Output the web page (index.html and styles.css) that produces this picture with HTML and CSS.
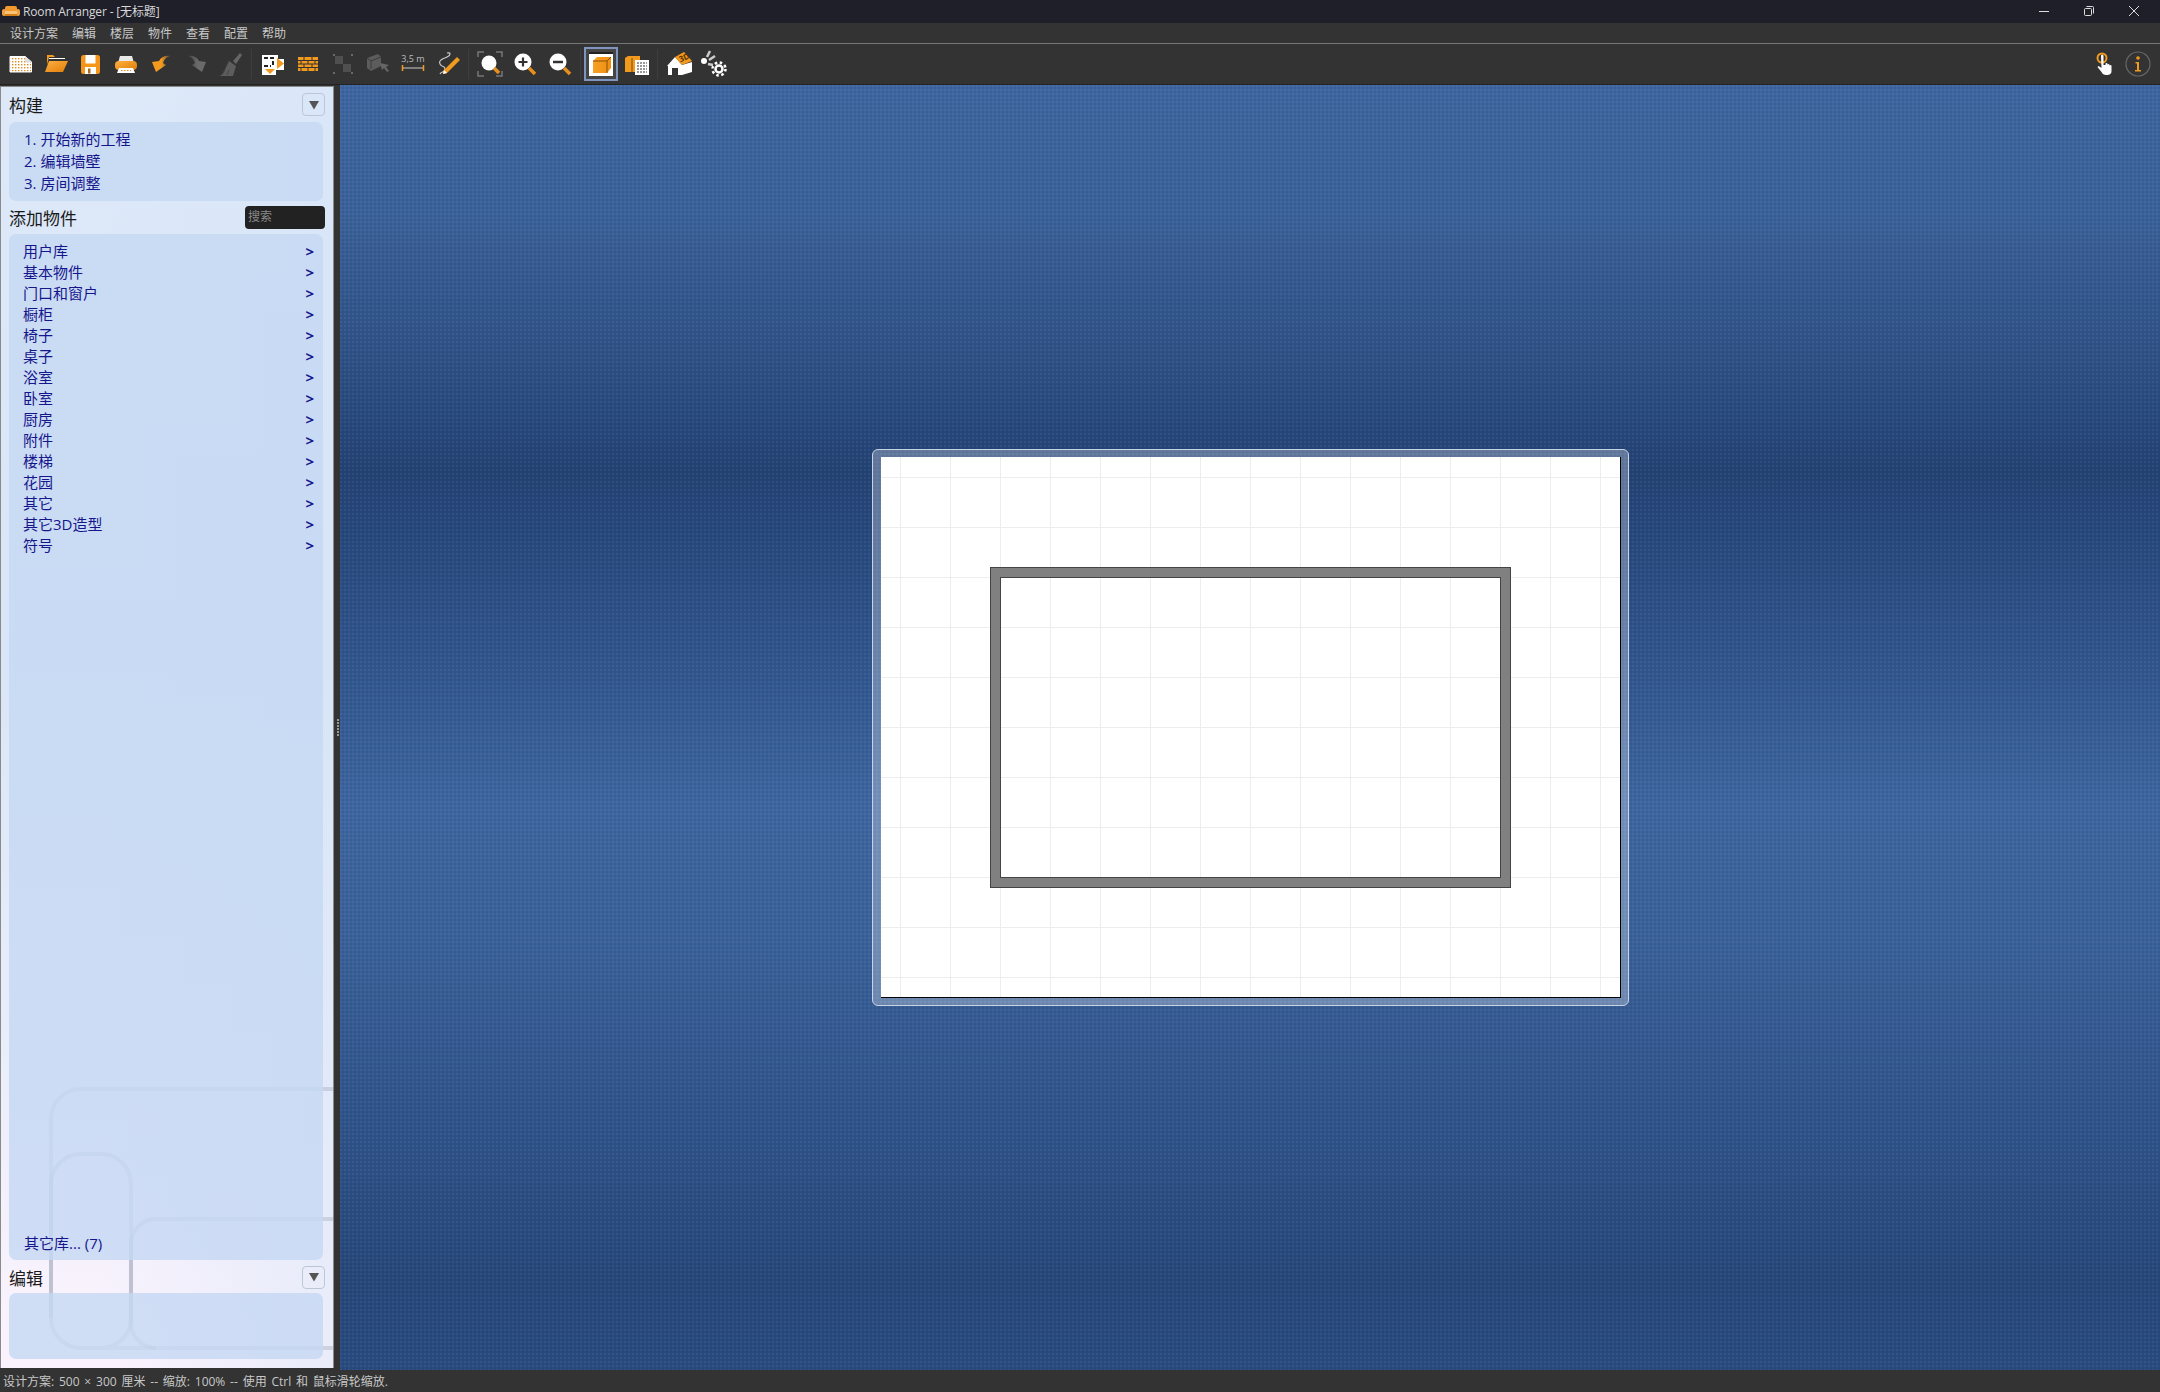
FILE: index.html
```html
<!DOCTYPE html>
<html lang="zh">
<head>
<meta charset="utf-8">
<title>Room Arranger</title>
<link rel="stylesheet" href="styles.css">
</head>
<body>
<svg class="defs" width="0" height="0">
  <defs>
    <pattern id="dots" width="3" height="3" patternUnits="userSpaceOnUse"><rect width="3" height="3" fill="#fff"/><rect x="1" y="1" width="1.4" height="1.4" fill="#e08a20"/></pattern>
    <linearGradient id="org" x1="0" y1="0" x2="1" y2="1"><stop offset="0" stop-color="#ffb040"/><stop offset="1" stop-color="#e07d0a"/></linearGradient>
    <linearGradient id="swoosh" x1="0" y1="0" x2="1" y2="0"><stop offset=".5" stop-color="#f29a1e"/><stop offset="1" stop-color="#3a3a3a"/></linearGradient>
    <linearGradient id="swooshd" x1="0" y1="0" x2="1" y2="0"><stop offset="0" stop-color="#3a3a3a"/><stop offset=".55" stop-color="#6a6a6a"/></linearGradient>
    <linearGradient id="cube" x1="0" y1="0" x2="1" y2="0"><stop offset="0" stop-color="#f7a126"/><stop offset="1" stop-color="#ee8e10"/></linearGradient>
  </defs>
</svg>

<header class="titlebar">
  <svg class="appicon" width="18" height="12" viewBox="0 0 18 12"><rect x="3" y="1" width="12" height="6" rx="2" fill="#f29a2e"/><rect x="0" y="4" width="4" height="7" rx="2" fill="#f2a040"/><rect x="14" y="4" width="4" height="7" rx="2" fill="#f2a040"/><rect x="3" y="6" width="12" height="4" fill="#fbc27a"/><rect x="3" y="9" width="12" height="2" fill="#d57d15"/></svg>
  <span class="apptitle">Room Arranger - [无标题]</span>
  <div class="winctl">
    <svg width="12" height="12" viewBox="0 0 12 12"><path d="M1 6.500h10" stroke="#ddd"/></svg>
    <svg width="12" height="12" viewBox="0 0 12 12"><rect x="1.500" y="3.500" width="7" height="7" rx="1" fill="none" stroke="#ddd"/><path d="M3.500 1.500h6a1 1 0 0 1 1 1v6" fill="none" stroke="#ddd"/></svg>
    <svg width="12" height="12" viewBox="0 0 12 12"><path d="M1 1l10 10M11 1L1 11" stroke="#ddd"/></svg>
  </div>
</header>

<nav class="menubar">
  <span>设计方案</span><span>编辑</span><span>楼层</span><span>物件</span><span>查看</span><span>配置</span><span>帮助</span>
</nav>

<div class="toolbar">
  <div class="tool"><svg viewBox="0 0 32 32"><path d="M5 8.500h15l6.500 5.500v10H5z" fill="url(#dots)" stroke="#fff"/><path d="M20 8v6h7z" fill="#ddd"/></svg></div>
  <div class="tool"><svg viewBox="0 0 32 32"><path d="M7 7h6l2 2H9l-2 8z" fill="#f29a1e"/><path d="M9 10h16v1H9z" fill="#fff"/><path d="M9 13h19l-5 11H5z" fill="url(#org)"/></svg></div>
  <div class="tool"><svg viewBox="0 0 32 32"><rect x="6" y="7" width="19" height="19" rx="2.500" fill="#f5951a"/><rect x="10.500" y="7" width="10" height="8.500" fill="#fff"/><rect x="10" y="19" width="11" height="7" fill="#fff"/><rect x="13" y="20.500" width="2.500" height="5" fill="#a86b20"/></svg></div>
  <div class="tool"><svg viewBox="0 0 32 32"><path d="M10 8h12l2 7H8z" fill="#e8e8e8"/><rect x="5" y="13" width="22" height="9" rx="4" fill="url(#org)"/><path d="M9 20h14l2 5H7z" fill="#fff"/><path d="M11 22.500h10" stroke="#e08a20" stroke-dasharray="1.500 1.500"/></svg></div>
  <div class="tool"><svg viewBox="0 0 32 32"><path d="M7 14l7-1c2-4 6-6 12-5-5 1-7 4-8 7l3 2-10 7z" fill="url(#swoosh)"/></svg></div>
  <div class="tool"><svg viewBox="0 0 32 32"><path d="M26 14l-7-1c-2-4-6-6-12-5 5 1 7 4 8 7l-3 2 10 7z" fill="url(#swooshd)"/></svg></div>
  <div class="tool"><svg viewBox="0 0 32 32"><path d="M25 5l2 2-6 9-3-3z" fill="#666"/><path d="M14 13l7 5-3 10H5c4-3 6-9 9-15z" fill="#5d5d5d"/><path d="M10 22l-3 5M14 22l-2 5" stroke="#444"/></svg></div>
  <i class="sep"></i>
  <div class="tool"><svg viewBox="0 0 32 32"><path d="M5 7h16v4h6v11h-8v5H5z" fill="#fff"/><path d="M7 10h12M7 18h7M16 13v5" stroke="#222" stroke-width="2" stroke-dasharray="4 2"/><path d="M20 10l7 5.500-7 5.500z" fill="#f29a1e"/><path d="M8 21h10l-5 5z" fill="#f29a1e"/></svg></div>
  <div class="tool"><svg viewBox="0 0 32 32"><path d="M6 9h20v14H6z" fill="#f29a1e"/><path d="M6 12.500h20M6 16h20M6 19.500h20M12 9v3.500M20 9v3.500M9 12.500V16M16 12.500V16M23 12.500V16M12 16v3.500M20 16v3.500M9 19.500V23M16 19.500V23M23 19.500V23" stroke="#333" stroke-width="1"/></svg></div>
  <div class="tool"><svg viewBox="0 0 32 32"><path d="M8 8h8v8H8zM16 16h8v8h-8z" fill="#4f4f4f"/><path d="M6 6h2v2H6zM24 6h2v2h-2zM6 24h2v2H6zM24 24h2v2h-2z" fill="#6a6a6a"/></svg></div>
  <div class="tool"><svg viewBox="0 0 32 32"><path d="M5 10l11-4 3 3v9l-10 5-4-3z" fill="#5c5c5c"/><path d="M5 10l4 3 10-4M9 13v8" stroke="#3c3c3c" fill="none"/><path d="M18 15l9 2-3 2 3 4-2 1-3-4-2 2z" fill="#666"/></svg></div>
  <div class="tool"><svg viewBox="0 0 32 32"><text class="measure" x="16" y="14" text-anchor="middle">3,5 m</text><path d="M6 20h20" stroke="#ccc"/><path d="M5.500 17v6M26.500 17v6" stroke="#f29a1e" stroke-width="1.500"/></svg></div>
  <div class="tool"><svg viewBox="0 0 32 32"><path d="M15 5c4-1 4 2 0 4s-9 3-7 7 5 1 5 5-4 2-5 5" fill="none" stroke="#ccc" stroke-width="1.200"/><path d="M25 9l3 3-13 13-4 1 1-4z" fill="#f29a1e"/><path d="M11 26l1-4 3 3z" fill="#fff"/></svg></div>
  <i class="sep"></i>
  <div class="tool"><svg viewBox="0 0 32 32"><path d="M4 9V4h6M22 4h6v5M28 23v5h-6M10 28H4v-5" fill="none" stroke="#777" stroke-width="1.500"/><circle cx="15" cy="15" r="7.500" fill="#fff"/><path d="M20 20l5 5" stroke="#e58f1f" stroke-width="3.500"/></svg></div>
  <div class="tool"><svg viewBox="0 0 32 32"><circle cx="14" cy="14" r="8.500" fill="#fff"/><path d="M9.500 14h9M14 9.500v9" stroke="#333" stroke-width="2.200"/><path d="M20 20l6 6" stroke="#e58f1f" stroke-width="3.500"/></svg></div>
  <div class="tool"><svg viewBox="0 0 32 32"><circle cx="14" cy="14" r="8.500" fill="#fff"/><path d="M9 14h10" stroke="#333" stroke-width="2.500"/><path d="M20 20l6 6" stroke="#e58f1f" stroke-width="3.500"/></svg></div>
  <i class="sep"></i>
  <div class="tool is-active"><svg viewBox="0 0 30 30"><rect x="3" y="3" width="24" height="24" fill="#fff"/><rect x="3" y="3" width="24" height="2" fill="#222"/><path d="M7 12l4-4h14v11l-4 5H7z" fill="url(#cube)"/><path d="M7 12h14v12M21 12l4-4" fill="none" stroke="#8a5208"/></svg></div>
  <div class="tool"><svg viewBox="0 0 32 32"><path d="M4 10l3-2h12v16H4z" fill="#f29a1e"/><path d="M11 10v14" stroke="#7a4a08"/><rect x="14" y="12" width="14" height="15" fill="#fff"/><path d="M16 15h10M16 18h10M16 21h10M16 24h10" stroke="#333" stroke-dasharray="2 1"/></svg></div>
  <i class="sep"></i>
  <div class="tool"><svg viewBox="0 0 32 32"><path d="M4 18l8-9 7 8v10H5V18zM19 17l10-3v10l-10 3z" fill="#fff"/><path d="M9 20h6v7H9z" fill="#333"/><path d="M12 9l9-5 8 9-10 4z" fill="#f29a1e"/><text class="roof" x="16" y="13" transform="rotate(-24 20 10)">3D</text></svg></div>
  <div class="tool"><svg viewBox="0 0 32 32"><circle cx="6" cy="13" r="3" fill="#fff"/><path d="M9 9l3-6M11 12l6-4M10 16l5 1" stroke="#ccc" stroke-width="2.500"/><circle cx="21" cy="21" r="3.500" fill="none" stroke="#fff" stroke-width="2.500"/><circle cx="21" cy="21" r="6.500" fill="none" stroke="#fff" stroke-width="2.500" stroke-dasharray="2.500 2.600"/></svg></div>
  <div class="tool-spacer"></div>
  <div class="tool tool-hand"><svg viewBox="0 0 32 32"><circle cx="14" cy="10" r="4.500" fill="none" stroke="#f29a1e" stroke-width="2"/><path d="M13 8a1.200 1.200 0 0 1 2.500 0v9l2 0 0-1a1 1 0 0 1 2 0v1a1 1 0 0 1 2 0v1a1 1 0 0 1 2 0v5c0 3-2 4-5 4s-4-1-5-3l-4-5 1-1 3 2z" fill="#fff"/></svg></div>
  <div class="tool tool-info"><svg viewBox="0 0 32 32"><circle cx="16" cy="16" r="12" fill="none" stroke="#666" stroke-width="1.200"/><circle cx="16" cy="10" r="1.800" fill="#f29a1e"/><path d="M13.500 14h3.500v8h2v1.500h-6V22h2v-6.500h-1.500z" fill="#f29a1e"/></svg></div>
</div>

<main class="workspace">
  <aside class="sidebar">
    <svg class="decor" width="332" height="300" viewBox="0 0 332 300"><g fill="none" stroke="#8c95a8" stroke-opacity=".3" stroke-width="4"><path d="M332 21H80a30 30 0 0 0-30 30v199"/><path d="M332 280H80a30 30 0 0 1-30-30V116a30 30 0 0 1 30-30h20a30 30 0 0 1 30 30v134a30 30 0 0 1-30 30"/><path d="M332 151H155a25 25 0 0 0-25 25v79a25 25 0 0 0 25 25"/></g></svg>
    <div class="panel-head panel-head-first"><h2>构建</h2><button class="collapse" type="button"><svg width="12" height="10" viewBox="0 0 12 10"><path d="M1 1h10L6 9.500z" fill="#555"/></svg></button></div>
    <section class="box steps">
      <a>1. 开始新的工程</a>
      <a>2. 编辑墙壁</a>
      <a>3. 房间调整</a>
    </section>
    <div class="panel-head"><h2>添加物件</h2><div class="search">搜索</div></div>
    <section class="box catalog">
      <a>用户库<b>&gt;</b></a>
      <a>基本物件<b>&gt;</b></a>
      <a>门口和窗户<b>&gt;</b></a>
      <a>橱柜<b>&gt;</b></a>
      <a>椅子<b>&gt;</b></a>
      <a>桌子<b>&gt;</b></a>
      <a>浴室<b>&gt;</b></a>
      <a>卧室<b>&gt;</b></a>
      <a>厨房<b>&gt;</b></a>
      <a>附件<b>&gt;</b></a>
      <a>楼梯<b>&gt;</b></a>
      <a>花园<b>&gt;</b></a>
      <a>其它<b>&gt;</b></a>
      <a>其它3D造型<b>&gt;</b></a>
      <a>符号<b>&gt;</b></a>
      <a class="more">其它库... (7)</a>
    </section>
    <div class="panel-head panel-head-last"><h2>编辑</h2><button class="collapse" type="button"><svg width="12" height="10" viewBox="0 0 12 10"><path d="M1 1h10L6 9.500z" fill="#555"/></svg></button></div>
    <section class="box editor"></section>
  </aside>
  <div class="gutter"><i></i><i></i><i></i><i></i><i></i><i></i></div>
  <div class="canvas">
    <div class="paper">
      <div class="sheet">
        <div class="room"></div>
      </div>
    </div>
  </div>
</main>

<footer class="statusbar">设计方案: 500 × 300 厘米 -- 缩放: 100% -- 使用 Ctrl 和 鼠标滑轮缩放.</footer>
</body>
</html>
```

FILE: styles.css
```css
* { box-sizing: border-box; }
html, body { height: 100%; }
body {
  margin: 0;
  display: flex;
  flex-direction: column;
  height: 1392px;
  overflow: hidden;
  background: #333;
  font-family: "Open Sans", "Noto Sans CJK SC", sans-serif;
}
.defs { position: absolute; }

.titlebar {
  flex: 0 0 23px;
  display: flex;
  align-items: center;
  padding: 0 0 1px 2px;
  background: #1e1f29;
  color: #d8d8d8;
  font-size: 12px;
}
.appicon { margin-right: 3px; }
.apptitle { letter-spacing: -.15px; }
.winctl { margin-left: auto; display: flex; gap: 33px; padding-right: 20px; }
.winctl svg { display: block; }

.menubar {
  flex: 0 0 21px;
  display: flex;
  align-items: center;
  padding: 0 0 1px 10px;
  gap: 14px;
  background: #333;
  border-bottom: 1px solid #777;
  color: #c8c8c8;
  font-size: 12px;
}

.toolbar {
  flex: 0 0 41px;
  display: flex;
  align-items: center;
  padding: 0 4px 1px 3px;
  background: #333;
  border-bottom: 1px solid #222;
}
.tool {
  flex: 0 0 35px;
  height: 32px;
  display: flex;
  justify-content: center;
}
.tool svg { width: 32px; height: 32px; display: block; }
.tool.is-active {
  height: 34px;
  flex-basis: 34px;
  margin-right: 1px;
  align-items: center;
  background: #444;
  border: 2px solid #7f95bd;
}
.tool.is-active svg { width: 30px; height: 30px; }
.sep {
  flex: 0 0 1px;
  height: 30px;
  margin: 0 3px;
  background: #3e3e3e;
}
.tool-spacer { flex: 1; }
.tool-info { flex-basis: 33px; margin-right: 2px; }
.measure { font: 9px "Open Sans", sans-serif; fill: #bbb; }
.roof { font: bold 8px "Open Sans", sans-serif; fill: #553000; }

.workspace {
  flex: 1;
  display: flex;
  min-height: 0;
}

.sidebar {
  position: relative;
  flex: 0 0 334px;
  display: flex;
  flex-direction: column;
  margin-top: 1px;
  margin-bottom: 2px;
  padding: 0 10px 9px 8px;
  border-left: 1px solid #8a8a8a;
  border-right: 1px solid #8a8a8a;
  border-top: 1px solid #888;
  background:
    linear-gradient(to right, rgba(214, 228, 246, 0) 30%, rgba(214, 228, 246, .45)),
    linear-gradient(#dde9f9, #d9e6f7 45%, #eaeefb 75%, #faf3fd 97%);
}
.decor {
  position: absolute;
  left: 0;
  bottom: 0;
}
.panel-head {
  position: relative;
  flex: 0 0 33px;
  display: flex;
  align-items: center;
  justify-content: space-between;
  margin-right: -2px;
}
.panel-head-first { flex-basis: 35px; }
.panel-head-last { padding-top: 1px; }
.panel-head h2 {
  margin: 0;
  font-size: 17px;
  font-weight: 400;
  color: #1a1a1a;
}
.collapse {
  width: 23px;
  height: 23px;
  padding: 0;
  display: flex;
  align-items: center;
  justify-content: center;
  border: 1px solid #bcc7d6;
  border-radius: 4px;
  background: transparent;
}
.search {
  width: 80px;
  height: 23px;
  padding-left: 3px;
  line-height: 22px;
  border-radius: 4px;
  background: #222;
  color: #888;
  font-size: 12px;
}
.box {
  position: relative;
  display: flex;
  flex-direction: column;
  border-radius: 7px;
  background: rgba(198, 216, 243, .82);
  color: #16168c;
  font-size: 15px;
}
.steps {
  flex: 0 0 79px;
  padding: 6px 0 0 15px;
}
.steps a { height: 22px; line-height: 22px; }
.catalog {
  flex: 1;
  padding: 7px 0 6px 14px;
}
.catalog a {
  display: flex;
  justify-content: space-between;
  height: 21px;
  line-height: 21px;
  padding-right: 9px;
}
.catalog b {
  font-size: 15px;
  font-weight: 700;
  line-height: 20px;
  font-family: "Open Sans", sans-serif;
}
.catalog .more {
  margin-top: auto;
  margin-left: 1px;
  display: block;
}
.editor { flex: 0 0 66px; }

.gutter {
  flex: 0 0 6px;
  display: flex;
  flex-direction: column;
  justify-content: center;
  align-items: center;
  gap: 1px;
  padding-left: 1px;
  background: #333;
}
.gutter i { width: 2px; height: 2px; background: #999; }

.canvas {
  flex: 1;
  display: flex;
  align-items: center;
  justify-content: center;
  padding-left: 1px;
  background:
    radial-gradient(circle at 1px 1px, rgba(255, 255, 255, .05) 1px, transparent 1.3px) 0 0 / 4px 4px,
    radial-gradient(circle at 3px 3px, rgba(0, 0, 0, .05) 1px, transparent 1.3px) 0 0 / 4px 4px,
    linear-gradient(#3d659f 0%, #3a6199 10%, #2a4c80 24%, #234274 30%, #2d5188 42%, #3d659f 56%, #3a6199 66%, #2f548b 80%, #264779 93%, #2a4b80 100%);
}
.paper {
  padding: 7px 7px 7px 8px;
  border: 1px solid #c8d2e6;
  border-radius: 6px;
  background: rgba(255, 255, 255, .28);
}
.sheet {
  width: 740px;
  height: 541px;
  display: flex;
  align-items: center;
  justify-content: center;
  border-right: 1px solid #000;
  border-bottom: 1px solid #000;
  background-color: #fff;
  background-image:
    linear-gradient(to right, #ededed 1px, transparent 1px),
    linear-gradient(to bottom, #ededed 1px, transparent 1px);
  background-position: 19px 0, 0 20px;
  background-size: 50px 50px;
}
.room {
  width: 519px;
  height: 319px;
  border: 9px solid #808080;
  outline: 1px solid #444;
  box-shadow: inset 0 0 0 1px #444;
}

.statusbar {
  flex: 0 0 22px;
  padding: 1px 0 0 3px;
  line-height: 21px;
  background: #333;
  color: #c8c8c8;
  font-size: 12px;
  word-spacing: 1.7px;
  white-space: nowrap;
}
```
